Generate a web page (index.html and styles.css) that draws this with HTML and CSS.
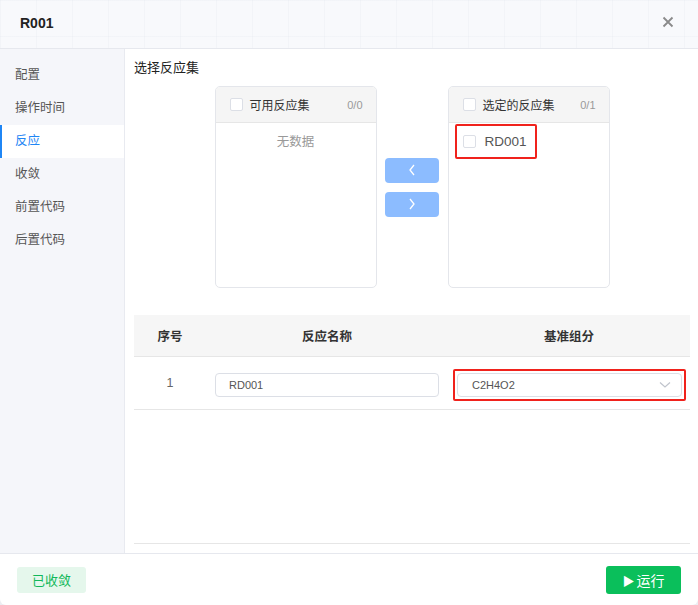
FILE: index.html
```html
<!doctype html>
<html lang="zh">
<head>
    <meta charset="UTF-8">
    <title>R001</title>
    <link rel="stylesheet" href="styles.css">
</head>
<body>

    <div class="dialog">

        <div class="head">
            <span class="title">R001</span>
            <span class="close">
                <svg width="12" height="12" viewBox="0 0 12 12"><path d="M1.5 1.5L10.5 10.5M10.5 1.5L1.5 10.5" stroke="#8a8a8a" stroke-width="1.8" fill="none"/></svg>
            </span>
        </div>

        <div class="middle">
            <ul class="menu">
                <li>配置</li>
                <li>操作时间</li>
                <li class="on">反应</li>
                <li>收敛</li>
                <li>前置代码</li>
                <li>后置代码</li>
            </ul>

            <div class="main">
                <div class="label">选择反应集</div>

                <div class="transfer">
                    <div class="panel">
                        <div class="panel-head">
                            <span class="check"></span>
                            <span class="panel-title">可用反应集</span>
                            <span class="count">0/0</span>
                        </div>
                        <div class="panel-body">
                            <div class="empty">无数据</div>
                        </div>
                    </div>

                    <div class="buttons">
                        <button class="move">
                            <svg width="8" height="12" viewBox="0 0 8 12"><path d="M6 1L2 6L6 11" stroke="#fff" stroke-width="1.3" fill="none"/></svg>
                        </button>
                        <button class="move">
                            <svg width="8" height="12" viewBox="0 0 8 12"><path d="M2 1L6 6L2 11" stroke="#fff" stroke-width="1.3" fill="none"/></svg>
                        </button>
                    </div>

                    <div class="panel">
                        <div class="panel-head">
                            <span class="check"></span>
                            <span class="panel-title">选定的反应集</span>
                            <span class="count">0/1</span>
                        </div>
                        <div class="panel-body">
                            <div class="item mark">
                                <span class="check"></span>
                                <span>RD001</span>
                            </div>
                        </div>
                    </div>
                </div>

                <div class="grid">
                    <table>
                        <thead>
                            <tr>
                                <th class="c1">序号</th>
                                <th class="c2">反应名称</th>
                                <th class="c3">基准组分</th>
                            </tr>
                        </thead>
                        <tbody>
                            <tr>
                                <td>1</td>
                                <td><div class="input">RD001</div></td>
                                <td>
                                    <div class="mark wide">
                                        <div class="input select">
                                            <span>C2H4O2</span>
                                            <svg width="12" height="8" viewBox="0 0 12 8"><path d="M1 1.5L6 6L11 1.5" stroke="#c0c4cc" stroke-width="1.2" fill="none"/></svg>
                                        </div>
                                    </div>
                                </td>
                            </tr>
                        </tbody>
                    </table>
                </div>
            </div>
        </div>

        <div class="foot">
            <button class="done">已收敛</button>
            <button class="run"><span class="tri">▶</span>运行</button>
        </div>

    </div>

</body>
</html>
```

FILE: styles.css
```css
body{
    margin: 0;
    background-color: #eceef2;
    font-family: "Liberation Sans", "Noto Sans CJK SC", sans-serif;
    font-size: 13px;
    color: #333;
}

.dialog{
    width: 698px;
    height: 605px;
    background-color: #fff;
    border-radius: 0 0 6px 6px;
    display: flex;
    flex-direction: column;
    overflow: hidden;
}

.head{
    height: 48px;
    flex: none;
    display: flex;
    align-items: center;
    justify-content: space-between;
    padding: 0 24px 0 20px;
    border-bottom: 1px solid #e6e8ee;
    background-color: #f8f9fc;
    background-image:
        linear-gradient(to right, rgba(225,228,236,0.25) 1px, transparent 1px),
        linear-gradient(to bottom, rgba(225,228,236,0.25) 1px, transparent 1px);
    background-size: 36px 36px;
}

.title{
    font-size: 14px;
    font-weight: bold;
    color: #222;
    margin-top: -2px;
}

.close{
    display: flex;
    margin-top: -4px;
}

.middle{
    flex: 1;
    display: flex;
    border-bottom: 1px solid #e6e8ee;
}

.menu{
    list-style: none;
    margin: 0;
    padding: 10px 0 0;
    width: 124px;
    flex: none;
    background-color: #f5f6fa;
    border-right: 1px solid #e8eaf0;
}

.menu li{
    height: 33px;
    line-height: 33px;
    padding-left: 15px;
    color: #555;
    font-size: 12.5px;
}

.menu li.on{
    background-color: #fff;
    color: #1f86f5;
    border-left: 2px solid #1f86f5;
    padding-left: 13px;
}

.main{
    flex: 1;
    padding: 9px 8px 0 9px;
    display: flex;
    flex-direction: column;
}

.label{
    line-height: 20px;
    font-size: 13px;
    color: #222;
}

.transfer{
    margin-top: 8px;
    display: flex;
    justify-content: center;
    align-items: center;
}

.panel{
    width: 160px;
    height: 200px;
    border: 1px solid #e4e6eb;
    border-radius: 5px;
    overflow: hidden;
}

.panel-head{
    height: 35px;
    background-color: #f5f5f5;
    border-bottom: 1px solid #e6e6e6;
    display: flex;
    align-items: center;
    padding: 0 13px 0 14px;
}

.check{
    width: 11px;
    height: 11px;
    border: 1px solid #dcdfe6;
    border-radius: 2px;
    background-color: #fff;
    flex: none;
}

.panel-title{
    margin-left: 7px;
    flex: 1;
    font-size: 12px;
    color: #333;
}

.count{
    font-size: 11px;
    color: #999;
}

.panel-body{
    padding: 1px 6px;
}

.empty{
    text-align: center;
    color: #999;
    font-size: 12.5px;
    margin-top: 7px;
}

.item{
    display: flex;
    align-items: center;
    gap: 9px;
    width: 66px;
    height: 31px;
    padding: 0 6px;
    font-size: 13.5px;
    color: #555;
}

.mark{
    border: 2px solid #f0221c;
    border-radius: 2px;
}

.buttons{
    display: flex;
    flex-direction: column;
    gap: 9px;
    margin: 0 9px 0 8px;
}

.move{
    width: 54px;
    height: 25px;
    border: none;
    border-radius: 4px;
    background-color: #8cbcff;
    display: flex;
    align-items: center;
    justify-content: center;
    padding: 0;
}

.grid{
    margin-top: 27px;
    height: 228px;
    border-bottom: 1px solid #e6e6e6;
}

table{
    width: 100%;
    border-collapse: collapse;
    table-layout: fixed;
}

th{
    height: 41px;
    padding: 0;
    background-color: #f6f6f6;
    font-weight: bold;
    font-size: 12.5px;
    color: #333;
    border-bottom: 1px solid #e6e6e6;
}

.c1{ width: 72px; }

td{
    height: 49px;
    text-align: center;
    border-bottom: 1px solid #e6e6e6;
    color: #666;
    font-size: 12.5px;
    padding: 3px 9px 0;
}

td:first-child{
    padding: 0;
}

.input{
    height: 22px;
    border: 1px solid #dcdfe6;
    border-radius: 4px;
    text-align: left;
    padding: 0 13px;
    line-height: 22px;
    font-size: 11px;
    color: #555;
}

.wide{
    margin: 0 -5px 0 -4px;
    padding: 2px;
}

.select{
    display: flex;
    align-items: center;
    justify-content: space-between;
    padding: 0 10px 0 14px;
}

.foot{
    height: 51px;
    flex: none;
    display: flex;
    align-items: center;
    justify-content: space-between;
    padding: 0 17px;
}

.done{
    width: 69px;
    height: 26px;
    border: none;
    border-radius: 3px;
    background-color: #e5f7ec;
    color: #11b85a;
    font-family: inherit;
    font-size: 13px;
}

.run{
    width: 75px;
    height: 28px;
    border: none;
    border-radius: 3px;
    background-color: #0abf5b;
    color: #fff;
    font-family: inherit;
    font-size: 14px;
}

.tri{
    font-size: 12px;
    margin-right: 2px;
}
```
